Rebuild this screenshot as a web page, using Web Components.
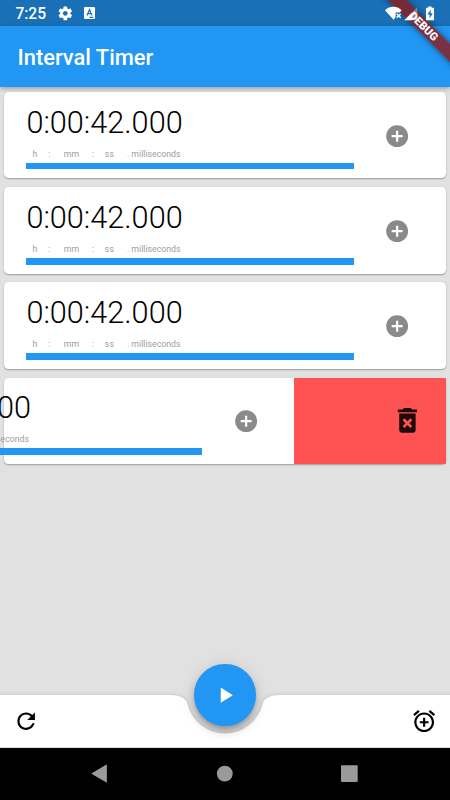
<!DOCTYPE html>
<html lang="en">
<head>
<meta charset="utf-8">
<title>Interval Timer</title>
<style>
html,body{margin:0;height:100%;overflow:hidden;font-family:Roboto,"Liberation Sans",sans-serif}
</style>
</head>
<body>
<interval-app></interval-app>
<script>
const define = (name, html, init) => customElements.define(name, class extends HTMLElement {
  constructor() {
    super();
    this.attachShadow({mode: 'open'}).innerHTML = html;
  }
  connectedCallback() { if (init) init.call(this, this.shadowRoot); }
});

const ICONS = {
  add: 'M12 2C6.48 2 2 6.48 2 12s4.48 10 10 10 10-4.48 10-10S17.52 2 12 2zm5 11h-4v4h-2v-4H7v-2h4V7h2v4h4v2z',
  trash: 'M6 19c0 1.1.9 2 2 2h8c1.1 0 2-.9 2-2V7H6v12zm2.46-7.12l1.41-1.41L12 12.59l2.12-2.12 1.41 1.41L13.41 14l2.12 2.12-1.41 1.41L12 15.41l-2.12 2.12-1.41-1.41L10.59 14l-2.13-2.12zM15.5 4l-1-1h-5l-1 1H5v2h14V4z',
  refresh: 'M17.65 6.35C16.2 4.9 14.21 4 12 4c-4.42 0-7.99 3.58-7.99 8s3.57 8 7.99 8c3.73 0 6.84-2.55 7.73-6h-2.08c-.82 2.33-3.04 4-5.65 4-3.31 0-6-2.69-6-6s2.69-6 6-6c1.66 0 3.14.69 4.22 1.78L13 11h7V4l-2.35 2.35z',
  alarm: 'M7.88 3.39L6.6 1.86 2 5.71l1.29 1.53 4.59-3.85zM22 5.72l-4.6-3.86-1.29 1.53 4.6 3.86L22 5.72zM12 4c-4.97 0-9 4.03-9 9s4.02 9 9 9c4.97 0 9-4.03 9-9s-4.03-9-9-9zm0 16c-3.87 0-7-3.13-7-7s3.13-7 7-7 7 3.13 7 7-3.13 7-7 7zm1-11h-2v3H8v2h3v3h2v-3h3v-2h-3V9z',
  play: 'M8 5v14l11-7z',
  gear: 'M19.43 12.98c.04-.32.07-.64.07-.98s-.03-.66-.07-.98l2.11-1.65c.19-.15.24-.42.12-.64l-2-3.46c-.12-.22-.39-.3-.61-.22l-2.49 1c-.52-.4-1.08-.73-1.69-.98l-.38-2.65C14.46 2.18 14.25 2 14 2h-4c-.25 0-.46.18-.49.42l-.38 2.65c-.61.25-1.17.59-1.69.98l-2.49-1c-.23-.09-.49 0-.61.22l-2 3.46c-.13.22-.07.49.12.64l2.11 1.65c-.04.32-.07.65-.07.98s.03.66.07.98l-2.11 1.65c-.19.15-.24.42-.12.64l2 3.46c.12.22.39.3.61.22l2.49-1c.52.4 1.08.73 1.69.98l.38 2.65c.03.24.24.42.49.42h4c.25 0 .46-.18.49-.42l.38-2.65c.61-.25 1.17-.59 1.69-.98l2.49 1c.23.09.49 0 .61-.22l2-3.46c.12-.22.07-.49-.12-.64l-2.11-1.65zM12 15.5c-1.93 0-3.5-1.57-3.5-3.5s1.57-3.5 3.5-3.5 3.5 1.57 3.5 3.5-1.57 3.5-3.5 3.5z'
};

define('md-icon', `<style>:host{display:block;width:26.3px;height:26.3px;flex:none}svg{display:block;width:100%;height:100%;fill:currentColor}</style><svg viewBox="0 0 24 24"><path/></svg>`,
  function (r) { r.querySelector('path').setAttribute('d', ICONS[this.getAttribute('name')]); });

// The system icons are painted above everything the app draws, the ribbon included.
define('status-bar', `<style>
:host{display:flex;align-items:center;height:26px;box-sizing:border-box;color:#fff;padding:0 15px 0 15.5px;flex:none;position:relative;z-index:6}
.time{font-size:15.6px;font-weight:500;line-height:26px;width:41.5px;padding-top:1px;letter-spacing:-.05px}
md-icon{width:16.6px;height:16.6px}
.a{width:11px;height:12px;margin-left:10.3px;display:block}
.sys{margin-left:auto;display:block;width:50px;height:18px}
</style>
<span class="time">7:25</span><md-icon name="gear"></md-icon>
<svg class="a" viewBox="0 0 11 12"><rect width="11" height="12" rx="1" fill="#fff"/><path d="M3 8.6 5.5 2.5 8 8.6M3.9 6.7H7.1M5.5 10.3H9.4" fill="none" stroke="#1a70b6" stroke-width="1.2"/></svg>
<svg class="sys" viewBox="0 0 50 18"><path d="M0 6.2C4.7 1.7 12 1.7 16.7 6.2L14.8 8.4H10.6V13L8.6 15.8Z" fill="#fff"/><path d="m11.7 9.7 4 4m0-4-4 4" stroke="#fff" stroke-width="1.5"/><path d="M19.3 16.3 32.3 3.3V16.3Z" fill="#fff" fill-opacity=".35"/><path d="M19.3 16.3 27.3 8.3V16.3Z" fill="#fff"/><path d="M41.3 3.8h1.9V2.5h3.4v1.3h1.9q.5 0 .5.6v11q0 .9-.8.9h-6.4q-.8 0-.8-.9v-11q0-.6.3-.6z" fill="#fff"/><path d="M45.6 5.4 42.4 10.4h2.2v4L47.8 9.2h-2.2z" fill="#1a70b6"/></svg>`);

define('app-bar', `<style>
:host{display:flex;align-items:center;height:61.4px;box-sizing:border-box;padding:2px 17.5px 0;background:#2196f3;color:#fff;font-size:21.9px;font-weight:500;flex:none;z-index:1;box-shadow:0 2px 4px rgba(0,0,0,.2),0 1px 6px rgba(0,0,0,.1)}
</style><slot></slot>`);

define('debug-ribbon', `<style>
:host{position:absolute;right:0;top:0;width:70px;height:70px;overflow:hidden;z-index:5}
div{position:absolute;left:70px;top:0;width:0;height:0;transform:rotate(45deg)}
span{position:absolute;left:-50px;top:30.7px;width:100px;height:13.1px;line-height:13.6px;text-align:center;background:rgba(144,24,24,.8);color:#fff;font-size:11.1px;font-weight:900;box-shadow:0 0 6px rgba(0,0,0,.5)}
</style><div><span><slot></slot></span></div>`);

define('timer-content', `<style>
:host{display:flex;box-sizing:border-box;width:441.2px;height:86.4px;padding-left:22px}
.main{width:327.5px;display:flex;flex-direction:column;flex:none}
.time{font-size:30.66px;font-weight:300;line-height:38px;height:38px;margin-top:11.6px;color:#000;white-space:nowrap}
.units{display:grid;grid-template-columns:17px 12px 32px 11px 22px 1fr;height:12px;margin-top:6.1px;font-size:8.76px;line-height:12px;color:#9e9e9e;white-space:nowrap}
.units span{text-align:center}.units span:last-child{text-align:left;padding-left:6.5px}
.bar{height:6.6px;margin-top:3.1px;background:#2196f3}
md-icon{color:#8a8a8a;margin:30.5px 0 0 30.5px}
</style>
<div class="main"><div class="time"><slot></slot></div>
<div class="units"><span>h</span><span>:</span><span>mm</span><span>:</span><span>ss</span><span>. milliseconds</span></div>
<div class="bar"></div></div><md-icon name="add"></md-icon>`);

define('timer-card', `<style>
:host{display:block;height:86.4px;background:#fff;border-radius:4.4px;box-shadow:0 1px 1.5px rgba(0,0,0,.3),0 0 1px rgba(0,0,0,.12)}
.row{display:flex}
.under{display:none}
:host([swiped]) .row{justify-content:flex-end;overflow:hidden;margin-left:-4.4px;border-radius:0 1px 1px 0}
:host([swiped]) .under{display:flex;align-items:center;justify-content:flex-end;box-sizing:border-box;width:151.6px;height:86.4px;padding-right:22px;background:#ff5252;flex:none}
:host([swiped]) timer-content{flex:none}
.under md-icon{width:32.85px;height:32.85px;color:rgba(0,0,0,.87)}
</style><div class="row"><timer-content><slot></slot></timer-content><div class="under"><md-icon name="trash"></md-icon></div></div>`);

define('timer-list', `<style>
:host{display:flex;flex-direction:column;gap:8.75px;flex:1;min-height:0;padding:4.7px 4.4px 0;background:#e1e1e1}
</style><slot></slot>`);

define('bottom-bar', `<style>
:host{display:block;position:relative;height:52.6px;flex:none;background:#e1e1e1}
.shape{position:absolute;left:0;top:-12px;width:450px;height:65px;overflow:hidden;display:block}
.row{position:relative;display:flex;justify-content:space-between;align-items:center;height:52.6px;padding:0 13.1px}
.fab{position:absolute;left:194.4px;top:-30.6px;width:61.3px;height:61.3px;border-radius:50%;background:#2196f3;color:#fff;display:flex;align-items:center;justify-content:center;box-shadow:0 4px 5px -1px rgba(0,0,0,.2),0 6px 10px rgba(0,0,0,.14),0 1px 16px rgba(0,0,0,.1)}
</style>
<svg class="shape" viewBox="0 -12 450 65"><path d="M-20 0H168.8Q185.2 0 187.4 9.05A38.7 38.7 0 0 0 262.6 9.05Q264.8 0 281.2 0H470V52.2H-20Z" fill="#fff" style="filter:drop-shadow(0 0 2px rgba(0,0,0,.15))"/></svg>
<div class="row"><md-icon name="refresh"></md-icon><md-icon name="alarm"></md-icon></div>
<div class="fab"><md-icon name="play"></md-icon></div>`);

define('system-nav', `<style>
:host{display:block;height:52.4px;background:#000;flex:none}svg{display:block;width:450px;height:52px}
</style><svg viewBox="0 748 450 52" fill="#9a9a9a"><path d="M91.8 773.2 106 764.8q.9-.4.9.5v16.6q0 .9-.9.4L91.8 774q-.6-.4 0-.8z"/><circle cx="224.8" cy="773.7" r="7.9"/><rect x="341" y="765.2" width="16.7" height="16.7" rx="1"/></svg>`);

define('interval-app', `<style>
:host{display:flex;flex-direction:column;position:relative;width:450px;height:800px;overflow:hidden;background:#1a70b6}
</style>
<status-bar></status-bar><app-bar>Interval Timer</app-bar>
<timer-list><timer-card>0:00:42.000</timer-card><timer-card>0:00:42.000</timer-card><timer-card>0:00:42.000</timer-card><timer-card swiped>0:00:42.000</timer-card></timer-list>
<bottom-bar></bottom-bar><system-nav></system-nav><debug-ribbon>DEBUG</debug-ribbon>`);
</script>
</body>
</html>
